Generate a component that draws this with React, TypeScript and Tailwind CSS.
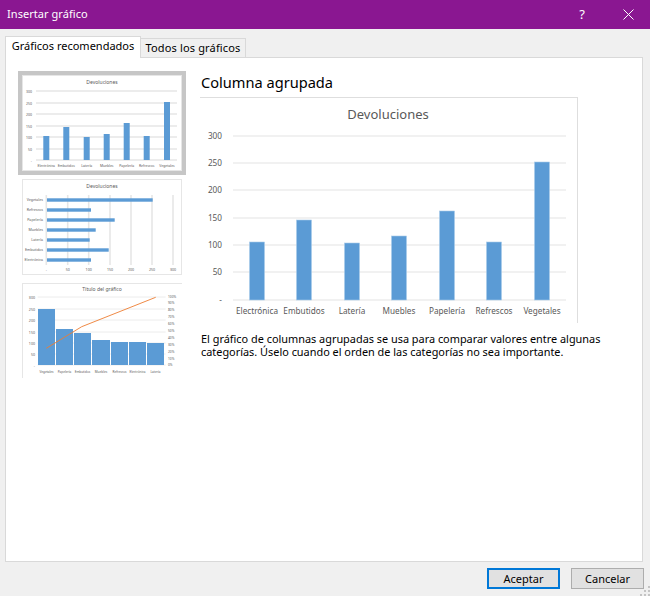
const font = "Noto Sans, Open Sans, sans-serif";
const cats = ["Electrónica", "Embutidos", "Latería", "Muebles", "Papelería", "Refrescos", "Vegetales"];

// main chart, coordinates are relative to the frame at (200,97)
function MainChart() {
  const grid = [
    ["300", 39],
    ["250", 66],
    ["200", 93],
    ["150", 121],
    ["100", 148],
    ["50", 175],
    ["-", 203],
  ] as const;
  const bars = [
    [57, 145],
    [104, 123],
    [152, 146],
    [199, 139],
    [247, 114],
    [294, 145],
    [342, 65],
  ];
  return (
    <svg width="377" height="226" viewBox="0 1 377 226" style={{ fontFamily: font }}>
      <text x="188" y="22" textAnchor="middle" fontSize="13" fill="#595959">Devoluciones</text>
      {grid.map(([label, y]) => (
        <g key={label}>
          <line x1="33" x2="366" y1={y} y2={y} stroke="#e3e3e3" strokeWidth="1.2" />
          <text x="22" y={y + 3} textAnchor="end" fontSize="8.2" fill="#595959">{label}</text>
        </g>
      ))}
      {bars.map(([x, top]) => (
        <rect key={x} x={x - 7.5} y={top} width="15" height={203 - top} fill="#5b9bd5" stroke="#a9cbe9" strokeWidth="0.6" />
      ))}
      {cats.map((c, i) => (
        <text key={c} x={bars[i][0]} y="217" textAnchor="middle" fontSize="8.2" fill="#595959">{c}</text>
      ))}
    </svg>
  );
}

function ColumnThumb() {
  const ys = [16, 28, 39, 51, 62, 74, 85];
  const labels = ["300", "250", "200", "150", "100", "50", "-"];
  const bars = [
    [24.3, 61],
    [44.3, 52],
    [64.7, 62],
    [84.7, 59],
    [104.7, 48],
    [124.7, 61],
    [145, 27],
  ];
  return (
    <svg width="158" height="94" viewBox="1 1 158 94" style={{ fontFamily: font }}>
      <text x="80" y="9" textAnchor="middle" fontSize="5" fill="#595959">Devoluciones</text>
      {ys.map((y, i) => (
        <g key={y}>
          <line x1="14" x2="155" y1={y} y2={y} stroke="#e6e6e6" strokeWidth="1.3" />
          <text x="10" y={y + 1.5} textAnchor="end" fontSize="3.5" fill="#595959">{labels[i]}</text>
        </g>
      ))}
      {bars.map(([x, top]) => (
        <rect key={x} x={x - 3} y={top} width="6" height={85 - top} fill="#5b9bd5" />
      ))}
      {cats.map((c, i) => (
        <text key={c} x={bars[i][0]} y="92" textAnchor="middle" fontSize="3.4" fill="#595959">{c}</text>
      ))}
    </svg>
  );
}

function BarThumb() {
  const xs = [24.3, 45.7, 66.7, 88, 109, 130, 151];
  const ticks = ["-", "50", "100", "150", "200", "250", "300"];
  const rows = [
    ["Vegetales", 21, 130.7],
    ["Refrescos", 31, 69],
    ["Papelería", 41, 92.7],
    ["Muebles", 51, 73.7],
    ["Latería", 61, 67.7],
    ["Embutidos", 71, 86.7],
    ["Electrónica", 81, 69],
  ] as const;
  return (
    <svg width="158" height="94" viewBox="1 1 158 94" style={{ fontFamily: font }}>
      <text x="80" y="9" textAnchor="middle" fontSize="5" fill="#595959">Devoluciones</text>
      {xs.map((x, i) => (
        <g key={x}>
          <line x1={x} x2={x} y1="16" y2="86" stroke="#e6e6e6" strokeWidth="1.6" />
          <text x={x} y="91.5" textAnchor="middle" fontSize="3.6" fill="#595959">{ticks[i]}</text>
        </g>
      ))}
      {rows.map(([label, y, right]) => (
        <g key={label}>
          <rect x="25" y={y - 1.7} width={right - 25} height="3.4" fill="#5b9bd5" />
          <text x="21" y={y + 1.2} textAnchor="end" fontSize="3.6" fill="#595959">{label}</text>
        </g>
      ))}
    </svg>
  );
}

function ParetoThumb() {
  const ys = [14, 26, 37, 49, 60, 71, 82];
  const labels = ["300", "250", "200", "150", "100", "50", "-"];
  const bars = [
    ["Vegetales", 16, 17, 26],
    ["Papelería", 34, 17, 46],
    ["Embutidos", 52, 17, 50],
    ["Muebles", 70, 18, 57],
    ["Refrescos", 89, 17, 59],
    ["Electrónica", 107, 17, 59],
    ["Latería", 125, 17, 60],
  ] as const;
  const pct = [
    ["100%", 14], ["90%", 20], ["80%", 27], ["70%", 34], ["60%", 41], ["50%", 48],
    ["40%", 55], ["30%", 62], ["20%", 69], ["10%", 76], ["0%", 82],
  ] as const;
  return (
    <svg width="159" height="94" viewBox="1 1 159 94" style={{ fontFamily: font }}>
      <text x="80" y="8" textAnchor="middle" fontSize="5" fill="#595959">Título del gráfico</text>
      {ys.map((y, i) => (
        <g key={y}>
          <line x1="15.7" x2="143.7" y1={y} y2={y} stroke="#ececec" />
          <text x="13" y={y + 1.5} textAnchor="end" fontSize="3.6" fill="#595959">{labels[i]}</text>
        </g>
      ))}
      {bars.map(([label, x, w, top]) => (
        <g key={label}>
          <rect x={x} y={top} width={w} height={82 - top} fill="#5b9bd5" />
          <text x={x + w / 2} y="90" textAnchor="middle" fontSize="3.1" fill="#595959">{label}</text>
        </g>
      ))}
      <polyline points="24.3,65.3 59.7,43.7 133.7,14.3" fill="none" stroke="#ed7d31" strokeWidth="0.9" />
      {pct.map(([label, y]) => (
        <text key={label} x="146" y={y + 1.2} fontSize="3.2" fill="#595959">{label}</text>
      ))}
    </svg>
  );
}

export default function App() {
  return (
    <div className="relative flex h-[596px] w-[650px] flex-col overflow-hidden bg-[#f0f0f0] text-[11px] text-black" style={{ fontFamily: font }}>
      <header className="flex h-[29px] shrink-0 items-center bg-[#8a1791] pl-[7px] text-white">
        <span className="text-[11px] tracking-[0.05px]">Insertar gráfico</span>
        <span className="ml-auto mr-[38px] text-[13px]">?</span>
        <svg width="11" height="11" viewBox="0 0 11 11" className="mr-[16px]">
          <path d="M0.5 0.5 10.5 10.5 M10.5 0.5 0.5 10.5" stroke="#fff" strokeWidth="1" fill="none" />
        </svg>
      </header>

      <div className="mt-[6px] flex h-[22px] shrink-0 items-end pl-[5px]">
        <div className="z-10 -mb-px flex h-[22px] w-[136px] items-center justify-center border border-b-0 border-[#d9d9d9] bg-white pb-[2px]">Gráficos recomendados</div>
        <div className="flex h-[19px] w-[105px] items-center justify-center border border-b-0 border-l-0 border-[#d9d9d9] tracking-[0.15px]">Todos los gráficos</div>
      </div>

      <main className="ml-[5px] flex h-[505px] w-[638px] shrink-0 border border-[#d9d9d9] bg-white pl-[12px] pt-[13px]">
        <div className="flex w-[168px] shrink-0 flex-col items-center">
          <div className="h-[104px] w-[168px] border-[4px] border-[#c6c6c6]">
            <div className="h-[96px] w-[160px] border border-[#e6e6e6]"><ColumnThumb /></div>
          </div>
          <div className="mt-[4px] h-[96px] w-[160px] border border-[#e6e6e6]"><BarThumb /></div>
          <div className="mt-[8px] h-[95px] w-[160px] border-l border-t border-[#e6e6e6]"><ParetoThumb /></div>
        </div>
        <div className="ml-[14px] flex w-[410px] flex-col">
          <h2 className="h-[26px] pl-px text-[14.6px] leading-[22px]">Columna agrupada</h2>
          <div className="h-[226px] w-[378px] border-r border-t border-[#dedede]"><MainChart /></div>
          <p className="mt-[9px] pl-px text-[10.9px] leading-[13px]">
            El gráfico de columnas agrupadas se usa para comparar valores entre algunas categorías. Úselo cuando el orden de las categorías no sea importante.
          </p>
        </div>
      </main>

      <footer className="flex flex-1 items-start pl-[487px] pt-[6px]">
        <button className="h-[21px] w-[73px] border-2 border-[#0078d7] bg-[#e1e1e1] text-[11px] leading-none">Aceptar</button>
        <button className="ml-[11px] h-[21px] w-[73px] border border-[#adadad] bg-[#e1e1e1] text-[11px] leading-none">Cancelar</button>
      </footer>

      <svg width="10" height="10" viewBox="0 0 10 10" className="absolute bottom-0 right-0">
        <path d="M8 0h2v2H8zM4 4h2v2H4zM8 4h2v2H8zM0 8h2v2H0zM4 8h2v2H4zM8 8h2v2H8z" fill="#c4c4c4" />
      </svg>
    </div>
  );
}
